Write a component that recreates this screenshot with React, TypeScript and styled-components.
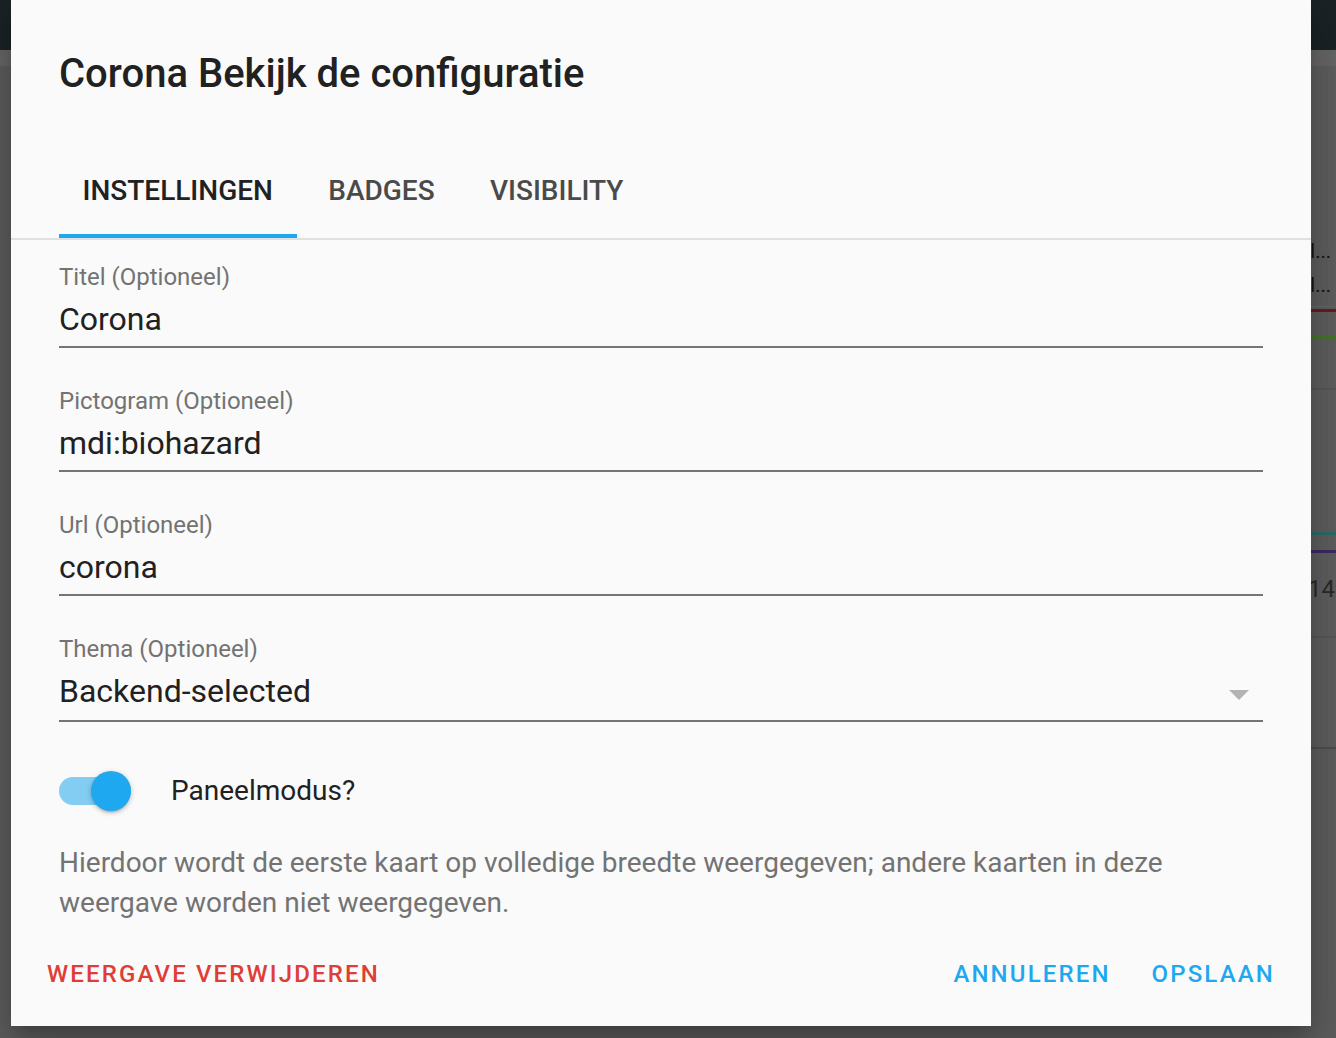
import React from "react";
import styled, { createGlobalStyle } from "styled-components";

const GlobalStyle = createGlobalStyle`
  html, body {
    margin: 0;
    padding: 0;
    width: 100%;
    height: 100%;
    overflow: hidden;
    font-family: Roboto, "Noto Sans", "Liberation Sans", sans-serif;
  }
  #root { height: 100%; }
  * { box-sizing: border-box; }
`;

const Page = styled.div`
  position: relative;
  width: 1336px;
  height: 1038px;
  background: #575757;
  display: flex;
  flex-direction: column;
  overflow: hidden;
`;

const AppHeader = styled.div`
  height: 50px;
  flex: none;
  background: #1b2327;
`;

const SubBar = styled.div`
  height: 16px;
  flex: none;
  background: #676767;
`;

const Backdrop = styled.div`
  flex: 1;
  display: flex;
  justify-content: flex-end;
  align-items: flex-start;
  background: #5e5e5e;
`;

const BgCard = styled.div`
  width: 300px;
  height: 683px;
  background: #5f5f5f;
  border-bottom: 2px solid #4f4f4f;
  display: flex;
  flex-direction: column;
  color: #141414;
  font-size: 20px;
`;

const BgSpacer = styled.div<{ $h: number }>`
  height: ${(p) => p.$h}px;
  flex: none;
`;

const BgRow = styled.div`
  height: 34px;
  flex: none;
  display: flex;
  align-items: center;
  justify-content: flex-end;
  padding-right: 5px;
  white-space: nowrap;
`;

const BgLine = styled.div<{ $c: string; $mt: number; $h?: number }>`
  height: ${(p) => p.$h ?? 3}px;
  margin-top: ${(p) => p.$mt}px;
  background: ${(p) => p.$c};
  flex: none;
`;

const BgNumber = styled.div`
  margin-top: 22px;
  height: 28px;
  line-height: 28px;
  display: flex;
  justify-content: flex-end;
  padding-right: 1px;
  color: #2a2a2a;
  font-size: 24px;
  flex: none;
`;

const Dialog = styled.div`
  position: absolute;
  left: 11px;
  top: 0;
  width: 1300px;
  height: 1026px;
  background: #fafafa;
  box-shadow: 0 24px 38px 3px rgba(0, 0, 0, 0.14),
    0 9px 46px 8px rgba(0, 0, 0, 0.12), 0 11px 15px -7px rgba(0, 0, 0, 0.2);
  display: flex;
  flex-direction: column;
`;

const Title = styled.h2`
  margin: 50px 0 0;
  padding: 0 48px;
  font-size: 40px;
  line-height: 48px;
  font-weight: 500;
  color: #212121;
`;

const TabBar = styled.div`
  margin-top: 44px;
  display: flex;
  padding: 0 48px;
  border-bottom: 2px solid #e0e0e0;
`;

const Tab = styled.div<{ $active?: boolean }>`
  position: relative;
  height: 96px;
  min-width: 169px;
  padding: 0 24.5px 0 23.5px;
  display: flex;
  align-items: center;
  justify-content: center;
  font-size: 28px;
  font-weight: 500;
  color: ${(p) => (p.$active ? "#212121" : "#4a4a4a")};
  &::after {
    content: "";
    position: absolute;
    left: 0;
    right: 0;
    bottom: 0;
    height: 4px;
    background: ${(p) => (p.$active ? "#1ea8f0" : "transparent")};
  }
`;

const Body = styled.div`
  padding: 23px 48px 0;
  display: flex;
  flex-direction: column;
`;

const Fields = styled.div`
  display: flex;
  flex-direction: column;
  gap: 39px;
`;

const Field = styled.div<{ $select?: boolean }>`
  display: flex;
  flex-direction: column;
  gap: 8px;
  padding-bottom: ${(p) => (p.$select ? 9 : 7)}px;
  border-bottom: 2px solid #757575;
`;

const Label = styled.div`
  font-size: 24px;
  line-height: 28px;
  color: #737373;
`;

const ValueRow = styled.div`
  display: flex;
  align-items: center;
`;

const Value = styled.div`
  flex: 1;
  font-size: 32px;
  line-height: 40px;
  color: #212121;
`;

const Arrow = styled.div`
  width: 0;
  height: 0;
  margin: 8px 14px 0 0;
  border-left: 10px solid transparent;
  border-right: 10px solid transparent;
  border-top: 10px solid #b3b3b3;
`;

const SwitchRow = styled.div`
  margin-top: 49px;
  display: flex;
  align-items: center;
  height: 40px;
  gap: 40px;
`;

const SwitchTrack = styled.div`
  position: relative;
  width: 72px;
  height: 28px;
  border-radius: 14px;
  background: #83cdf3;
  flex: none;
`;

const SwitchThumb = styled.div`
  position: absolute;
  right: 0;
  top: -6px;
  width: 40px;
  height: 40px;
  border-radius: 50%;
  background: #1ea8f0;
  box-shadow: 0 3px 2px -2px rgba(0, 0, 0, 0.2),
    0 2px 4px 0 rgba(0, 0, 0, 0.14), 0 1px 6px 0 rgba(0, 0, 0, 0.12);
`;

const SwitchLabel = styled.div`
  font-size: 28px;
  line-height: 40px;
  color: #212121;
`;

const Description = styled.p`
  margin: 32px 0 0;
  font-size: 28px;
  line-height: 40px;
  color: #737373;
`;

const Actions = styled.div`
  margin-top: 15px;
  display: flex;
  align-items: center;
  padding: 0 20px;
`;

const Spacer = styled.div`
  flex: 1;
`;

const TextButton = styled.button<{ $danger?: boolean; $ml?: number }>`
  height: 72px;
  margin-left: ${(p) => p.$ml ?? 0}px;
  padding: 0 16px;
  border: none;
  background: transparent;
  font-family: Roboto, "Noto Sans", "Liberation Sans", sans-serif;
  font-size: 24px;
  font-weight: 500;
  letter-spacing: 0.0893em;
  text-transform: uppercase;
  color: ${(p) => (p.$danger ? "#df3e37" : "#1ea8f0")};
  cursor: pointer;
`;

const fields = [
  { label: "Titel (Optioneel)", value: "Corona" },
  { label: "Pictogram (Optioneel)", value: "mdi:biohazard" },
  { label: "Url (Optioneel)", value: "corona" },
];

export default function App() {
  return (
    <>
      <GlobalStyle />
      <Page>
        <AppHeader />
        <SubBar />
        <Backdrop>
          <BgCard>
            <BgSpacer $h={168} />
            <BgRow>Totaal...</BgRow>
            <BgRow>Totaal...</BgRow>
            <BgLine $c="#686868" $mt={4} $h={1} />
            <BgLine $c="#6a1c1c" $mt={2} />
            <BgLine $c="#46752c" $mt={24} />
            <BgLine $c="#575757" $mt={49} $h={2} />
            <BgLine $c="#2b6d6b" $mt={142} />
            <BgLine $c="#3d2a63" $mt={15} />
            <BgNumber>14</BgNumber>
            <BgLine $c="#575757" $mt={33} $h={2} />
          </BgCard>
        </Backdrop>
        <Dialog>
          <Title>Corona Bekijk de configuratie</Title>
          <TabBar>
            <Tab $active>INSTELLINGEN</Tab>
            <Tab>BADGES</Tab>
            <Tab>VISIBILITY</Tab>
          </TabBar>
          <Body>
            <Fields>
              {fields.map((f) => (
                <Field key={f.label}>
                  <Label>{f.label}</Label>
                  <Value>{f.value}</Value>
                </Field>
              ))}
              <Field $select>
                <Label>Thema (Optioneel)</Label>
                <ValueRow>
                  <Value>Backend-selected</Value>
                  <Arrow />
                </ValueRow>
              </Field>
            </Fields>
            <SwitchRow>
              <SwitchTrack>
                <SwitchThumb />
              </SwitchTrack>
              <SwitchLabel>Paneelmodus?</SwitchLabel>
            </SwitchRow>
            <Description>
              Hierdoor wordt de eerste kaart op volledige breedte weergegeven;
              andere kaarten in deze weergave worden niet weergegeven.
            </Description>
          </Body>
          <Actions>
            <TextButton $danger>Weergave verwijderen</TextButton>
            <Spacer />
            <TextButton>Annuleren</TextButton>
            <TextButton $ml={9}>Opslaan</TextButton>
          </Actions>
        </Dialog>
      </Page>
    </>
  );
}
